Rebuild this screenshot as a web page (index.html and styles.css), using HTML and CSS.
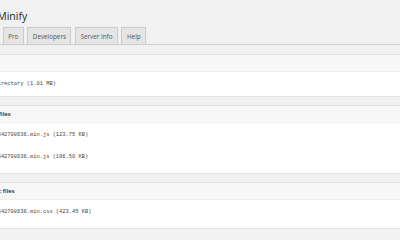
FILE: index.html
```html
<!DOCTYPE html>
<html lang="en">
<head>
  <meta charset="UTF-8">
  <title>Fast Velocity Minify</title>
  <link rel="stylesheet" href="styles.css">
</head>
<body>

<div class="wrap">
  <h1>Fast Velocity Minify</h1>

  <div class="tabs">
    <span class="tab active">Status</span>
    <span class="tab">Settings</span>
    <span class="tab">Pro</span>
    <span class="tab">Developers</span>
    <span class="tab">Server Info</span>
    <span class="tab">Help</span>
  </div>

  <div class="box">
    <h2 class="box-title">Cache</h2>
    <div class="box-body">
      <p class="line">Cache directory (1.01 MB)</p>
    </div>
  </div>

  <div class="box">
    <h2 class="box-title">Header files</h2>
    <div class="box-body list">
      <p class="line">theme-1542708636.min.js (123.75 KB)</p>
      <p class="line">other-1542708636.min.js (196.50 KB)</p>
    </div>
  </div>

  <div class="box">
    <h2 class="box-title">Dynamic files</h2>
    <div class="box-body list">
      <p class="line">theme-1542708636.min.css (423.45 KB)</p>
    </div>
  </div>
</div>

</body>
</html>
```

FILE: styles.css
```css
body {
  margin: 0;
  background: #f1f1f1;
  color: #444;
  font-family: "Open Sans", "Noto Sans", sans-serif;
  overflow: hidden;
}
.wrap {
  margin-left: -70px;
}
h1 {
  font-size: 10.5px;
  font-weight: normal;
  line-height: 13px;
  color: #23282d;
  margin: 0 0 0 4px;
  padding-top: 10px;
}
.tabs {
  display: flex;
  gap: 3.5px;
  margin-top: 4px;
  padding-left: 2px;
  border-bottom: 1px solid #ccc;
}
.tab {
  font-size: 6.3px;
  line-height: 11px;
  padding: 2.5px 4.5px;
  border: 1px solid #ccc;
  border-bottom: none;
  background: #e5e5e5;
  color: #555;
}
.tab.active {
  background: #f1f1f1;
  color: #000;
}
.box {
  margin-top: 9px;
  background: #fff;
  border: 1px solid #e2e2e2;
  border-right: none;
}
.box + .box {
  margin-top: 8px;
}
.box-title {
  margin: 0;
  height: 16px;
  line-height: 16px;
  padding-left: 45px;
  font-size: 6px;
  font-weight: 600;
  color: #23282d;
  background: #f7f7f7;
  border-bottom: 1px solid #eee;
}
.box-body {
  padding: 1px 0 1px 44px;
}
.box-body.list {
  padding-bottom: 5px;
}
.line {
  margin: 0;
  line-height: 22px;
  font-family: "Liberation Mono", monospace;
  font-size: 5.4px;
  color: #444;
}
```
